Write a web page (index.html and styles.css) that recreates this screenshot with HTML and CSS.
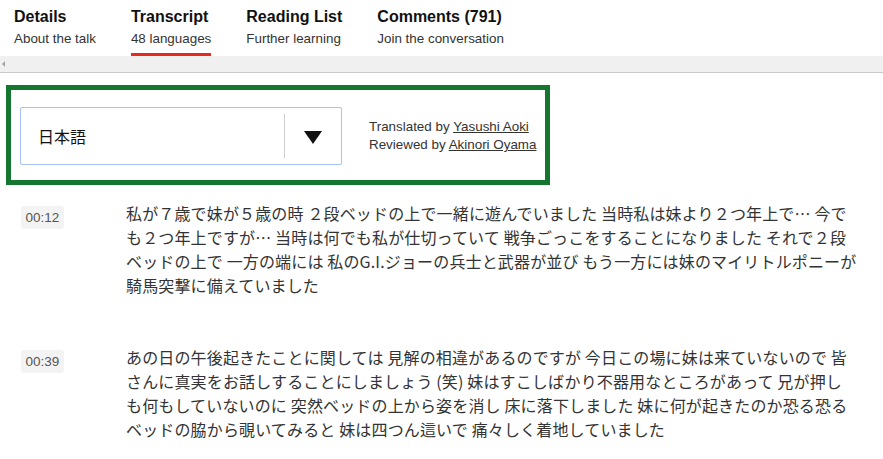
FILE: index.html
```html
<!DOCTYPE html>
<html lang="ja">
<head>
    <meta charset="UTF-8">
    <title>Transcript</title>
    <link rel="stylesheet" href="styles.css">
</head>
<body>
    <nav class="tabs">
        <a class="tab" href="#details">
            <span class="tab-title">Details</span>
            <span class="tab-sub">About the talk</span>
        </a>
        <a class="tab active" href="#transcript">
            <span class="tab-title">Transcript</span>
            <span class="tab-sub">48 languages</span>
        </a>
        <a class="tab" href="#reading">
            <span class="tab-title">Reading List</span>
            <span class="tab-sub">Further learning</span>
        </a>
        <a class="tab" href="#comments">
            <span class="tab-title">Comments (791)</span>
            <span class="tab-sub">Join the conversation</span>
        </a>
    </nav>

    <div class="scrollbar">
        <span class="scroll-arrow"></span>
    </div>

    <section class="lang-box">
        <div class="lang-select">
            <span class="lang-name">日本語</span>
            <span class="lang-toggle"><span class="triangle"></span></span>
        </div>
        <div class="credits">
            <p>Translated by <a href="#">Yasushi Aoki</a></p>
            <p>Reviewed by <a href="#">Akinori Oyama</a></p>
        </div>
    </section>

    <main class="transcript">
        <div class="segment">
            <div class="time"><span class="badge">00:12</span></div>
            <p class="text">私が７歳で妹が５歳の時 ２段ベッドの上で一緒に遊んでいました 当時私は妹より２つ年上で… 今で<br>も２つ年上ですが… 当時は何でも私が仕切っていて 戦争ごっこをすることになりました それで２段<br>ベッドの上で 一方の端には 私のG.I.ジョーの兵士と武器が並び もう一方には妹のマイリトルポニーが<br>騎馬突撃に備えていました</p>
        </div>
        <div class="segment">
            <div class="time"><span class="badge">00:39</span></div>
            <p class="text">あの日の午後起きたことに関しては 見解の相違があるのですが 今日この場に妹は来ていないので 皆<br>さんに真実をお話しすることにしましょう (笑) 妹はすこしばかり不器用なところがあって 兄が押し<br>も何もしていないのに 突然ベッドの上から姿を消し 床に落下しました 妹に何が起きたのか恐る恐る<br>ベッドの脇から覗いてみると 妹は四つん這いで 痛々しく着地していました</p>
        </div>
    </main>
</body>
</html>
```

FILE: styles.css
```css
* {
    margin: 0;
    padding: 0;
    box-sizing: border-box;
}

body {
    font-family: 'Liberation Sans', Arial, sans-serif;
    background: #fff;
    color: #222;
}

.tabs {
    display: flex;
    gap: 35px;
    padding-left: 14px;
    height: 56px;
}

.tab {
    display: flex;
    flex-direction: column;
    padding-top: 7px;
    text-decoration: none;
    color: #111;
}

.tab.active {
    border-bottom: 3px solid #e62b1e;
}

.tab-title {
    font-size: 16px;
    font-weight: bold;
    line-height: 20px;
}

.tab-sub {
    font-size: 13.4px;
    line-height: 16px;
    margin-top: 4px;
    color: #333;
}

.scrollbar {
    height: 17px;
    background: #f0f0f0;
    border-bottom: 1px solid #c8c8c8;
    position: relative;
}

.scroll-arrow {
    position: absolute;
    left: 2px;
    top: 5px;
    border-top: 3px solid transparent;
    border-bottom: 3px solid transparent;
    border-right: 3px solid #a3a3a3;
}

.lang-box {
    display: flex;
    align-items: center;
    width: 544px;
    height: 100px;
    margin: 12px 0 16px 6px;
    border: 5px solid #15762f;
    padding-left: 9px;
    padding-top: 2px;
}

.lang-select {
    display: flex;
    align-items: center;
    width: 322px;
    height: 58px;
    border: 1px solid #a4c2f4;
    border-radius: 2px;
}

.lang-name {
    flex: 1;
    padding-left: 17px;
    font-family: 'Noto Sans CJK JP', sans-serif;
    font-size: 16px;
    color: #111;
}

.lang-toggle {
    display: flex;
    align-items: center;
    justify-content: center;
    width: 57px;
    height: 44px;
    border-left: 1px solid #cfcfcf;
}

.triangle {
    border-left: 9.5px solid transparent;
    border-right: 9.5px solid transparent;
    border-top: 13px solid #111;
    margin-top: 2px;
}

.credits {
    margin-left: 27px;
    font-size: 13.4px;
    line-height: 18px;
    color: #333;
}

.credits a {
    color: #333;
}

.segment {
    display: flex;
}

.segment + .segment {
    margin-top: 48px;
}

.time {
    flex: 0 0 126px;
    padding-left: 21px;
    padding-top: 5px;
}

.badge {
    display: inline-block;
    width: 43px;
    height: 23px;
    line-height: 23px;
    text-align: center;
    background: #f3f3f3;
    border-radius: 3px;
    font-size: 13.5px;
    color: #555;
}

.text {
    flex: 1;
    font-family: 'Noto Sans CJK JP', sans-serif;
    font-size: 16px;
    letter-spacing: 0.15px;
    line-height: 24px;
    color: #333;
    white-space: nowrap;
}
```
